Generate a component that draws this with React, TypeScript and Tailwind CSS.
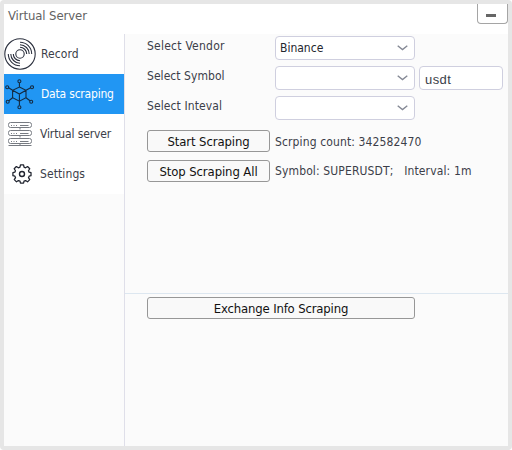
import React from 'react';

function RecordIcon() {
  return (
    <svg width="32" height="32" viewBox="0 0 32 32" fill="none" stroke="#2b303e" strokeWidth="1.1">
      <circle cx="16" cy="16" r="15.2" />
      <circle cx="16" cy="16" r="4.2" />
      <path d="M16 9.3A6.7 6.7 0 0 1 22.7 16M16 6.8A9.2 9.2 0 0 1 25.2 16M16 4.3A11.7 11.7 0 0 1 27.7 16" />
      <path d="M16 22.7A6.7 6.7 0 0 1 9.3 16M16 25.2A9.2 9.2 0 0 1 6.8 16M16 27.7A11.7 11.7 0 0 1 4.3 16" />
    </svg>
  );
}

function NetworkIcon() {
  return (
    <svg width="30" height="32" viewBox="0 0 30 32" fill="none" stroke="#142b42" strokeWidth="1.1">
      <path d="M15.4 9L22 12.3V19.7L15.4 23.2L8.6 19.7V12.3ZM8.6 12.3L15.4 16L22 12.3M15.4 16V23.2M15.4 9V5M22 12.3L26.6 9.8M22 19.7L26 22.8M15.4 23.2V27.5M8.6 19.7L4.8 22.8M8.6 12.3L4.6 9.8" />
      <circle cx="15.4" cy="3.3" r="1.5" />
      <circle cx="28" cy="9.2" r="1.5" />
      <circle cx="27.2" cy="23.8" r="1.5" />
      <circle cx="15.4" cy="29.2" r="1.5" />
      <circle cx="3.7" cy="23.8" r="1.5" />
      <circle cx="3.2" cy="9.2" r="1.5" />
    </svg>
  );
}

function ServerIcon() {
  return (
    <svg width="24" height="24" viewBox="0 0 24 24" fill="none" stroke="#777b82" strokeWidth="1">
      {[0.5, 8.5, 16.5].map((y) => (
        <g key={y}>
          <rect x="0.5" y={y} width="23" height="5" rx="2" />
          <path d={`M3 ${y + 3}h1M5.5 ${y + 3}h1M8 ${y + 3}h1M12 ${y + 3}h8.5`} />
          <path d={`M12 ${y + 5}v2`} />
        </g>
      ))}
      <path d="M0.5 23.5H23.5" />
    </svg>
  );
}

function GearIcon() {
  return (
    <svg width="22" height="22" viewBox="0 0 22 22" fill="none" stroke="#20242f" strokeWidth="1.4" strokeLinejoin="round">
      <path transform="translate(1 1) scale(.91)" d="M9.3 1h3.4l.5 2.5 1.7.7 2.2-1.4 2.4 2.4-1.4 2.2.7 1.6 2.1.5v3.4l-2.1.5-.7 1.6 1.4 2.2-2.4 2.4-2.2-1.4-1.7.7-.5 2.2H9.3l-.5-2.2-1.7-.7-2.2 1.4-2.4-2.4 1.4-2.2-.7-1.6L1 12.9V9.5l2.1-.5.7-1.6-1.4-2.2 2.4-2.4L7 4.2l1.8-.7Z" />
      <circle cx="11" cy="11" r="2.5" />
    </svg>
  );
}

function Combo({ value = '' }: { value?: string }) {
  return (
    <div className="flex h-6 w-[140px] items-center justify-between rounded-[4px] border border-[#cfcfdf] bg-white pr-[6px] pl-1">
      <span className="text-[#24262e]">{value}</span>
      <svg width="11" height="6" viewBox="0 0 11 6" fill="none" stroke="#858995" strokeWidth="1.4">
        <path d="M.7 .7L5.5 4.5L10.3 .7" />
      </svg>
    </div>
  );
}

export default function App() {
  return (
    <div className="h-[450px] w-[512px] overflow-hidden rounded-[4px] bg-[#e6e6e6] p-1 font-['DejaVu_Sans_Condensed','DejaVu_Sans',sans-serif] text-[12px] leading-4 font-normal whitespace-pre text-[#3b3e49] [font-stretch:condensed]">
      <div className="flex h-[442px] flex-col bg-[#fbfbfb]">
        <header className="flex h-[30px] items-start justify-between bg-white pl-1">
          <span className="pt-1 text-[13px] tracking-[-0.1px] text-[#636363]">Virtual Server</span>
          <button className="flex h-5 w-[31px] justify-center rounded-b-[4px] border border-t-0 border-[#a5a5a5] pt-[10px] pr-[3px]">
            <span className="h-[3px] w-[10px] bg-[#666]" />
          </button>
        </header>
        <div className="flex flex-1">
          <nav className="w-[121px] border-r border-[#dfdfe9]">
            <div className="flex h-10 items-center bg-white">
              <RecordIcon />
              <span className="pl-[5px] tracking-[0.1px]">Record</span>
            </div>
            <div className="flex h-10 items-center bg-[#2196f3] text-white">
              <NetworkIcon />
              <span className="pl-[7px] tracking-[-0.2px]">Data scraping</span>
            </div>
            <div className="flex h-10 items-center bg-white pl-1">
              <ServerIcon />
              <span className="pl-[8px] tracking-[-0.13px]">Virtual server</span>
            </div>
            <div className="flex h-10 items-center bg-white pl-[7px]">
              <GearIcon />
              <span className="pl-[7px] tracking-[0.1px]">Settings</span>
            </div>
          </nav>
          <main className="flex-1">
            <section className="h-[260px] border-b border-[#dde7f0] pt-[2px] pl-[22px]">
              <div className="flex h-[30px]">
                <span className="w-32 pt-[2px] tracking-[0.24px]">Select Vendor</span>
                <Combo value="Binance" />
              </div>
              <div className="flex h-[30px]">
                <span className="w-32 pt-[2px] tracking-[0.05px]">Select Symbol</span>
                <Combo />
                <div className="ml-1 flex h-6 w-[84px] items-center rounded-[4px] border border-[#cfcfdf] bg-white pt-1 pl-[5px] font-['Liberation_Sans',Arial,sans-serif] text-[13px] tracking-[0.4px]">usdt</div>
              </div>
              <div className="flex h-[34px]">
                <span className="w-32 pt-[2px] tracking-[0.1px]">Select Inteval</span>
                <Combo />
              </div>
              <div className="flex h-[30px]">
                <button className="h-[22px] w-[123px] rounded-[3px] border border-[#979797] bg-[#f9f9f9] pt-px text-[13px] tracking-[-0.1px] text-[#111]">Start Scraping</button>
                <span className="pt-1 pl-[5px] tracking-[0.12px]">Scrping count: 342582470</span>
              </div>
              <div className="flex h-[30px]">
                <button className="h-[22px] w-[123px] rounded-[3px] border border-[#979797] bg-[#f9f9f9] pt-px text-[13px] tracking-[-0.1px] text-[#111]">Stop Scraping All</button>
                <span className="pt-[3px] pl-[5px] tracking-[0.13px]">Symbol: SUPERUSDT;   Interval: 1m</span>
              </div>
            </section>
            <section className="pt-[3px] pl-[22px]">
              <button className="h-[22px] w-[268px] rounded-[3px] border border-[#979797] bg-[#f9f9f9] pt-px text-[13px] tracking-[-0.17px] text-[#111]">Exchange Info Scraping</button>
            </section>
          </main>
        </div>
      </div>
    </div>
  );
}
